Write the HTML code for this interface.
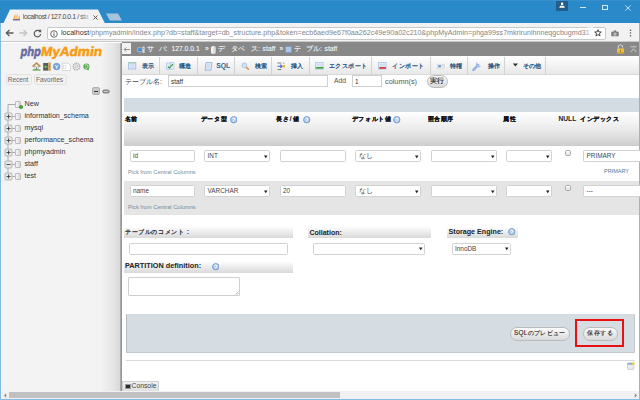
<!DOCTYPE html>
<html><head><meta charset="utf-8">
<style>
*{box-sizing:border-box;margin:0;padding:0}
html,body{width:640px;height:400px;overflow:hidden;background:#fff;font-family:"Liberation Sans",sans-serif;position:relative}
.a{position:absolute}
.t{position:absolute;white-space:nowrap;line-height:1}
/* chrome */
#title{left:0;top:0;width:640px;height:23px;background:linear-gradient(#4597cf 0,#2a8ac9 1px,#2a8ac9 100%)}
#tab{left:0;top:0;width:130px;height:23px}
#toolbar{left:0;top:23px;width:640px;height:19px;background:#f2f2f2;border-bottom:1px solid #c8c8c8}
#addr{left:46.5px;top:26.5px;width:559px;height:13px;background:#fff;border:1px solid #c9c9c9;border-radius:2px}
#lborder{left:0;top:23px;width:1px;height:377px;background:#84bbe3}
#rborder{left:639px;top:23px;width:1px;height:377px;background:#84bbe3}
#bborder{left:0;top:399px;width:640px;height:1px;background:#84bbe3}
/* nav */
#nav{left:1px;top:43px;width:120px;height:348px;background:linear-gradient(to right,#f3f3f3 0,#f3f3f3 100px,#e6e6e6 112px,#d6d6d6 120px)}
#navsep{left:120px;top:43px;width:2px;height:348px;background:linear-gradient(to right,#b4b4b4,#8c8c8c)}
/* main */
#bc{left:122px;top:42.2px;width:517px;height:14.3px;background:#888}
#menu{left:122px;top:56px;width:517px;height:19px;background:linear-gradient(#fff,#e8e8e8);border-bottom:1px solid #d8d8d8}
.div{position:absolute;top:57px;width:1px;height:18px;background:#d3d3d3}
.mt{position:absolute;top:62.9px;font-size:6.3px;font-weight:normal;color:#1a4d78;-webkit-text-stroke:0.25px #1a4d78;white-space:nowrap;line-height:1}
/* scrollbar */
#hs{left:1px;top:390.8px;width:638px;height:8.2px;background:#f1f1f1}
#hthumb{left:9px;top:392px;width:331px;height:6px;background:#c1c1c1}
</style></head><body>
<div class="a" id="title"></div>
<svg class="a" style="left:0;top:0" width="640" height="23">
  <polygon points="3.3,23.5 10,9.6 98,9.6 105,23.5" fill="#f2f2f2"/>
  <polygon points="106,13.5 118,13.5 122,20.5 110,20.5" fill="#a6c3da"/>
</svg>
<div class="a" id="toolbar"></div>
<div class="a" id="addr"></div>

<!-- tab content -->
<svg class="a" style="left:11.5px;top:13px" width="9" height="8" viewBox="0 0 9 8">
  <path d="M1.2 5.8 L3.2 0.8 L3.8 5.8 Z M4 5.8 L5.2 0.3 L6.2 5.8 Z M6.2 5.8 L7.3 2 L8.2 5.8 Z" fill="#f7a030"/>
  <path d="M3.2 0.8 L2.6 5.8 H3.8 Z M5.2 0.3 L4.6 5.8 H6.2 Z" fill="#fcd9a0"/>
  <rect x="1" y="6.2" width="7" height="1.2" fill="#55508a"/>
</svg>
<div class="t" style="left:22.8px;top:14px;font-size:6.9px;letter-spacing:-0.42px;color:#4a4a4a;width:68px;overflow:hidden">localhost / 127.0.0.1 / sta</div>
<div class="a" style="left:80px;top:12px;width:11px;height:10px;background:linear-gradient(to right,rgba(242,242,242,0),#f2f2f2)"></div>
<svg class="a" style="left:92.5px;top:15px" width="5" height="5" viewBox="0 0 5 5"><path d="M0.5 0.5 L4.5 4.5 M4.5 0.5 L0.5 4.5" stroke="#555" stroke-width="1"/></svg>
<!-- window controls -->
<div class="a" style="left:556px;top:1px;width:12px;height:9.5px;background:#245d8a"></div>
<svg class="a" style="left:556px;top:1px" width="12" height="10" viewBox="0 0 12 10"><rect x="5" y="1.5" width="2.2" height="2.6" rx="0.6" fill="#fff"/><path d="M3.2 6.8 L4.2 4.8 H7.9 L8.9 6.8 Z" fill="#fff"/></svg>
<div class="a" style="left:580px;top:7px;width:6px;height:1px;background:#d3e6f5"></div>
<div class="a" style="left:602px;top:4.8px;width:6px;height:5.3px;border:1px solid #d3e6f5"></div>
<svg class="a" style="left:625px;top:5px" width="6" height="6" viewBox="0 0 6 6"><path d="M0.3 0.3 L5.7 5.7 M5.7 0.3 L0.3 5.7" stroke="#d3e6f5" stroke-width="0.9"/></svg>
<!-- nav buttons -->
<svg class="a" style="left:5px;top:29px" width="9" height="8" viewBox="0 0 9 8"><path d="M8.5 4 H1.5 M4.5 1 L1.3 4 L4.5 7" stroke="#5a5a5a" stroke-width="1.3" fill="none"/></svg>
<svg class="a" style="left:19px;top:29px" width="9" height="8" viewBox="0 0 9 8"><path d="M0.5 4 H7.5 M4.5 1 L7.7 4 L4.5 7" stroke="#c4c4c4" stroke-width="1.3" fill="none"/></svg>
<svg class="a" style="left:33px;top:29px" width="9" height="9" viewBox="0 0 9 9"><path d="M7.3 3.2 A3.2 3.2 0 1 0 7.6 5" stroke="#5a5a5a" stroke-width="1.2" fill="none"/><path d="M5.2 0.8 L8.2 0.8 L8.2 3.8 Z" fill="#5a5a5a"/></svg>
<svg class="a" style="left:50px;top:29.5px" width="8" height="8" viewBox="0 0 8 8"><circle cx="4" cy="4" r="3.3" stroke="#5a5a5a" stroke-width="0.9" fill="none"/><rect x="3.5" y="3.3" width="1" height="2.7" fill="#5a5a5a"/><rect x="3.5" y="1.8" width="1" height="0.9" fill="#5a5a5a"/></svg>
<div class="t" style="left:61px;top:29.8px;font-size:7.15px;color:#858585;letter-spacing:0"><span style="color:#303030">localhost</span>/phpmyadmin/index.php?db=staff&amp;target=db_structure.php&amp;token=ecb6aed9e67f0aa262c49e90a02c210&amp;phpMyAdmin=phga99ss7mkrirunihnneqgcbugmd31'</div>
<div class="a" style="left:585px;top:27px;width:8px;height:11px;background:linear-gradient(to right,rgba(255,255,255,0),#fff)"></div>
<svg class="a" style="left:594px;top:28.7px" width="8" height="8" viewBox="0 0 9 9"><path d="M4.5 0.8 L5.5 3.3 L8.2 3.4 L6.1 5.1 L6.8 7.8 L4.5 6.3 L2.2 7.8 L2.9 5.1 L0.8 3.4 L3.5 3.3 Z" stroke="#333" stroke-width="1" fill="none" stroke-linejoin="round"/></svg>
<svg class="a" style="left:610.5px;top:30px" width="8" height="7" viewBox="0 0 8 7"><path d="M0.3 1.8 H2.3 L3 0.6 H5 L5.7 1.8 H7.7 V6.3 H0.3 Z" fill="#7b7b7b"/><circle cx="4" cy="4" r="1.5" fill="#e9e9e9"/><circle cx="4" cy="4" r="0.8" fill="#7b7b7b"/></svg>
<svg class="a" style="left:629px;top:29px" width="3" height="8" viewBox="0 0 3 8"><circle cx="1.5" cy="1.2" r="0.8" fill="#555"/><circle cx="1.5" cy="4" r="0.8" fill="#555"/><circle cx="1.5" cy="6.8" r="0.8" fill="#555"/></svg>
<div class="a" id="lborder"></div>
<div class="a" id="rborder"></div>
<div class="a" id="bborder"></div>

<div class="a" id="nav"></div>
<div class="a" id="navsep"></div>
<!-- logo -->
<svg class="a" style="left:18px;top:43px" width="86" height="17" viewBox="0 0 86 17">
 <g transform="translate(0,12.6) skewX(-9)">
 <text x="2" y="0" font-family="Liberation Sans" font-weight="bold" font-size="13.2" fill="#666aa2" stroke="#666aa2" stroke-width="0.55" textLength="20.3" lengthAdjust="spacingAndGlyphs">php</text>
 <text x="22.6" y="0" font-family="Liberation Sans" font-weight="bold" font-size="13.2" fill="#f89b10" stroke="#f89b10" stroke-width="0.55" textLength="60.8" lengthAdjust="spacingAndGlyphs">MyAdmin</text>
 </g>
</svg>
<!-- nav icons -->
<svg class="a" style="left:32px;top:62px" width="60" height="9" viewBox="0 0 60 9">
 <path d="M0.6 4.6 L4.5 1 L8.4 4.6" stroke="#c08a4a" stroke-width="1.6" fill="none" stroke-linejoin="round"/>
 <rect x="2.2" y="4.6" width="4.6" height="3" fill="#f4f4f4" stroke="#9a9a9a" stroke-width="0.4"/><rect x="3.8" y="5.4" width="1.4" height="2.2" fill="#777"/>
 <rect x="0.5" y="7.4" width="8" height="1.2" fill="#59a84a"/>
 <rect x="11.2" y="1" width="5.2" height="7.6" fill="#555e55"/><path d="M12 4.8 L14 3.2 V4.2 H15.6 V5.4 H14 V6.4 Z" fill="#6cc35a"/>
 <rect x="16.4" y="0.4" width="2.4" height="8.4" fill="#d3a05a"/><rect x="17.3" y="3.8" width="0.6" height="1" fill="#7a5020"/>
 <circle cx="24.6" cy="4.6" r="3.4" fill="#79a6dc"/><circle cx="24.6" cy="4.6" r="3.4" fill="none" stroke="#5a88c8" stroke-width="0.5"/><path d="M23.3 3.2 L24.6 5 L25.9 3.2 M24.6 5 V6.6" stroke="#fff" stroke-width="0.9" fill="none"/>
 <path d="M30.3 1.2 H36 L38.5 3.4 V8.6 H30.3 Z" fill="#fcfcfc" stroke="#c2c2c2" stroke-width="0.6"/><rect x="31.5" y="3.6" width="2.4" height="2.6" fill="none" stroke="#cfcfcf" stroke-width="0.5"/>
 <circle cx="44.5" cy="4.6" r="3.2" fill="none" stroke="#a9a9a9" stroke-width="1.6" stroke-dasharray="1 0.6"/><circle cx="44.5" cy="4.6" r="1.4" fill="#e0e0e0" stroke="#b0b0b0" stroke-width="0.5"/>
 <circle cx="54.4" cy="4.5" r="3.1" fill="#61ad5b"/><path d="M53 3.2 A1.8 1.8 0 1 1 53.2 6" stroke="#d8efd5" stroke-width="0.9" fill="none"/><path d="M54.6 7 L57 8.4 L56.2 6 Z" fill="#3f8f3a"/>
</svg>
<!-- recent / favorites -->
<div class="a" style="left:5.5px;top:74px;width:26px;height:11px;border:1px solid #e2e2e2;border-radius:3px;background:#f2f2f2"></div>
<div class="a" style="left:33.5px;top:74px;width:33px;height:11px;border:1px solid #e2e2e2;border-radius:3px;background:#f2f2f2"></div>
<div class="t" style="left:7.8px;top:76.5px;font-size:6.5px;color:#666">Recent</div>
<div class="t" style="left:36px;top:76.5px;font-size:6.6px;color:#666">Favorites</div>
<!-- collapse / link -->
<div class="a" style="left:91.5px;top:87px;width:8px;height:8px;border-radius:2px;background:#c8c8c8;border:1px solid #b0b0b0"></div>
<div class="a" style="left:93.5px;top:90.5px;width:4px;height:1px;background:#333"></div>
<svg class="a" style="left:101.5px;top:89px" width="8" height="5" viewBox="0 0 8 5"><rect x="0.3" y="0.6" width="7.4" height="3.8" rx="1.9" fill="#8a8a8a"/><rect x="1.8" y="1.9" width="4.4" height="1.2" rx="0.6" fill="#d0d0d0"/></svg>
<!-- tree -->
<svg class="a" style="left:0;top:98px" width="30" height="85" viewBox="0 0 30 85">
 <path d="M8 6.5 V78.5 M8 6.5 H15 M11 18.5 H15 M11 30.5 H15 M11 42.5 H15 M11 54.5 H15 M11 66.5 H15 M11 78.5 H15" stroke="#9a9a9a" stroke-width="0.8" fill="none"/>
</svg>
<svg class="a" style="left:4px;top:112px" width="9" height="9" viewBox="0 0 9 9"><rect x="1" y="1" width="7" height="7" rx="1" fill="#e6e6e6" stroke="#a8a8a8" stroke-width="0.8"/><path d="M2.5 4.5 H6.5 M4.5 2.5 V6.5" stroke="#444" stroke-width="0.9"/></svg><div class="a" style="left:15px;top:113px;width:6px;height:7px;border:1px solid #bdbdbd;border-radius:1px;background:linear-gradient(to right,#f8f8f8,#d6d6d6)"></div><svg class="a" style="left:4px;top:124px" width="9" height="9" viewBox="0 0 9 9"><rect x="1" y="1" width="7" height="7" rx="1" fill="#e6e6e6" stroke="#a8a8a8" stroke-width="0.8"/><path d="M2.5 4.5 H6.5 M4.5 2.5 V6.5" stroke="#444" stroke-width="0.9"/></svg><div class="a" style="left:15px;top:125px;width:6px;height:7px;border:1px solid #bdbdbd;border-radius:1px;background:linear-gradient(to right,#f8f8f8,#d6d6d6)"></div><svg class="a" style="left:4px;top:136px" width="9" height="9" viewBox="0 0 9 9"><rect x="1" y="1" width="7" height="7" rx="1" fill="#e6e6e6" stroke="#a8a8a8" stroke-width="0.8"/><path d="M2.5 4.5 H6.5 M4.5 2.5 V6.5" stroke="#444" stroke-width="0.9"/></svg><div class="a" style="left:15px;top:137px;width:6px;height:7px;border:1px solid #bdbdbd;border-radius:1px;background:linear-gradient(to right,#f8f8f8,#d6d6d6)"></div><svg class="a" style="left:4px;top:148px" width="9" height="9" viewBox="0 0 9 9"><rect x="1" y="1" width="7" height="7" rx="1" fill="#e6e6e6" stroke="#a8a8a8" stroke-width="0.8"/><path d="M2.5 4.5 H6.5 M4.5 2.5 V6.5" stroke="#444" stroke-width="0.9"/></svg><div class="a" style="left:15px;top:149px;width:6px;height:7px;border:1px solid #bdbdbd;border-radius:1px;background:linear-gradient(to right,#f8f8f8,#d6d6d6)"></div><svg class="a" style="left:4px;top:160px" width="9" height="9" viewBox="0 0 9 9"><rect x="1" y="1" width="7" height="7" rx="1" fill="#e6e6e6" stroke="#a8a8a8" stroke-width="0.8"/><path d="M2.5 4.5 H6.5" stroke="#444" stroke-width="0.9"/></svg><div class="a" style="left:15px;top:161px;width:6px;height:7px;border:1px solid #bdbdbd;border-radius:1px;background:linear-gradient(to right,#f8f8f8,#d6d6d6)"></div><svg class="a" style="left:4px;top:172px" width="9" height="9" viewBox="0 0 9 9"><rect x="1" y="1" width="7" height="7" rx="1" fill="#e6e6e6" stroke="#a8a8a8" stroke-width="0.8"/><path d="M2.5 4.5 H6.5 M4.5 2.5 V6.5" stroke="#444" stroke-width="0.9"/></svg><div class="a" style="left:15px;top:173px;width:6px;height:7px;border:1px solid #bdbdbd;border-radius:1px;background:linear-gradient(to right,#f8f8f8,#d6d6d6)"></div><div class="a" style="left:15px;top:101px;width:6px;height:7px;border:1px solid #bdbdbd;border-radius:1px;background:linear-gradient(to right,#f8f8f8,#d6d6d6)"></div><div class="a" style="left:19px;top:105px;width:3.5px;height:3.5px;border-radius:50%;background:#4aa23a"></div><div class="t" style="left:24.5px;top:100.5px;font-size:7.15px;color:#2a3440">New</div><div class="t" style="left:24.5px;top:112.5px;font-size:7.15px;color:#2a3440">information_schema</div><div class="t" style="left:24.5px;top:124.5px;font-size:7.15px;color:#2a3440">mysql</div><div class="t" style="left:24.5px;top:136.5px;font-size:7.15px;color:#2a3440">performance_schema</div><div class="t" style="left:24.5px;top:148.5px;font-size:7.15px;color:#2a3440">phpmyadmin</div><div class="t" style="left:24.5px;top:160.5px;font-size:7.15px;color:#2a3440">staff</div><div class="t" style="left:24.5px;top:172.5px;font-size:7.15px;color:#2a3440">test</div>

<div class="a" id="bc"></div>
<div class="a" id="menu"></div>


<!-- breadcrumb -->
<div class="a" style="left:122px;top:43px;width:9px;height:11px;background:#f2f2f2"></div>
<svg class="a" style="left:122.5px;top:45.5px" width="8" height="7" viewBox="0 0 8 7"><path d="M7 3.5 H1.2 M3.2 1.5 L1.2 3.5 L3.2 5.5" stroke="#666" stroke-width="0.7" fill="none"/></svg>
<svg class="a" style="left:137px;top:45.5px" width="8" height="8" viewBox="0 0 8 8"><rect x="0.3" y="1.5" width="5.2" height="4.5" fill="#b9c6d3"/><rect x="0.9" y="2.1" width="4" height="3.3" fill="#4f8ad0"/><rect x="5.6" y="0.5" width="2" height="6.5" fill="#d8dde2"/><rect x="6" y="2" width="1" height="0.6" fill="#4a4"/><rect x="1.8" y="6.3" width="2.4" height="1.2" fill="#9aa"/></svg>

<div class="t" style="left:147px;top:45.5px;font-size:6.8px;color:#f4f6fa;-webkit-text-stroke:0.1px #f4f6fa">サ</div><div class="t" style="left:158.5px;top:45.5px;font-size:6.8px;color:#f4f6fa;-webkit-text-stroke:0.1px #f4f6fa">バ:</div><div class="t" style="left:171.4px;top:45.5px;font-size:6.8px;color:#f4f6fa;-webkit-text-stroke:0.1px #f4f6fa">127.0.0.1</div><div class="t" style="left:205px;top:45.5px;font-size:6.8px;color:#f4f6fa;-webkit-text-stroke:0.1px #f4f6fa">&#187;</div><div class="t" style="left:218px;top:45.5px;font-size:6.8px;color:#f4f6fa;-webkit-text-stroke:0.1px #f4f6fa">デ</div><div class="t" style="left:231px;top:45.5px;font-size:6.8px;color:#f4f6fa;-webkit-text-stroke:0.1px #f4f6fa">タベ</div><div class="t" style="left:251px;top:45.5px;font-size:6.8px;color:#f4f6fa;-webkit-text-stroke:0.1px #f4f6fa">ス:</div><div class="t" style="left:262.6px;top:45.5px;font-size:6.8px;color:#f4f6fa;-webkit-text-stroke:0.1px #f4f6fa">staff</div><div class="t" style="left:279.5px;top:45.5px;font-size:6.8px;color:#f4f6fa;-webkit-text-stroke:0.1px #f4f6fa">&#187;</div><div class="t" style="left:293.5px;top:45.5px;font-size:6.8px;color:#f4f6fa;-webkit-text-stroke:0.1px #f4f6fa">テ</div><div class="t" style="left:306px;top:45.5px;font-size:6.8px;color:#f4f6fa;-webkit-text-stroke:0.1px #f4f6fa">ブル:</div><div class="t" style="left:324.5px;top:45.5px;font-size:6.8px;color:#f4f6fa;-webkit-text-stroke:0.1px #f4f6fa">staff</div><div class="a" style="left:211px;top:45.5px;width:5px;height:8px;border-radius:2px;background:linear-gradient(to right,#fff,#c8c8c8)"></div>

<div class="a" style="left:285px;top:46px;width:7px;height:7px;background:#a9c7e8;border:1px solid #7a9cc8"></div>

<svg class="a" style="left:615.8px;top:43.5px" width="9" height="10" viewBox="0 0 9 10"><path d="M2.3 4.6 V3.1 A2.2 2.2 0 0 1 6.7 3.1 V3.6" stroke="#d9d9d9" stroke-width="1" fill="none"/><rect x="1" y="4.5" width="7" height="4.8" fill="#eec040"/><rect x="1" y="8" width="7" height="1.3" fill="#d6a22a"/><rect x="4.1" y="6.2" width="0.9" height="1.4" fill="#7a5010"/></svg>
<svg class="a" style="left:629.5px;top:45.5px" width="7" height="7" viewBox="0 0 7 7"><path d="M0.5 0.8 H6.5 M0.8 6 L3.5 2.8 L6.2 6" stroke="#d6d6d6" stroke-width="0.9" fill="none"/></svg>
<div class="div" style="left:159px"></div><div class="div" style="left:197px"></div><div class="div" style="left:234px"></div><div class="div" style="left:271px"></div><div class="div" style="left:309px"></div><div class="div" style="left:371px"></div><div class="div" style="left:430px"></div><div class="div" style="left:467px"></div><div class="div" style="left:504px"></div><div class="div" style="left:545px"></div><svg class="a" style="left:128px;top:62px" width="9" height="9" viewBox="0 0 9 9"><rect x="0.4" y="0.4" width="7.4" height="6.6" fill="#dce8f6" stroke="#9dbbe2" stroke-width="0.8"/><rect x="0.8" y="0.8" width="6.6" height="1" fill="#b5dca0"/><path d="M3 1.8 V7 M5.3 1.8 V7" stroke="#b8cde8" stroke-width="0.6"/></svg><div class="mt" style="left:141.5px;font-size:6.3px;letter-spacing:0.25px">表示</div><svg class="a" style="left:166px;top:62px" width="9" height="9" viewBox="0 0 9 9"><rect x="0.5" y="1" width="4.5" height="6.5" fill="#dfeaf7" stroke="#a3bfe3" stroke-width="0.6"/><rect x="4.2" y="0.5" width="3.8" height="6.5" fill="#e6eff9" stroke="#a3bfe3" stroke-width="0.6"/><path d="M2 4.8 L3.3 6 L7 2.2" stroke="#3e9b3e" stroke-width="1.2" fill="none"/></svg><div class="mt" style="left:178.7px;font-size:6.3px;letter-spacing:0.6px">構造</div><svg class="a" style="left:204px;top:62px" width="9" height="9" viewBox="0 0 9 9"><path d="M2 0.6 H8 L7 8.2 H1 Z" fill="#e3edf9" stroke="#7fa4d6" stroke-width="0.7"/><path d="M2.8 2.8 H6.3 M2.6 4.4 H6.1 M2.4 6 H5.9" stroke="#a7c0e0" stroke-width="0.5"/></svg><div class="mt" style="left:216.3px;font-size:6.8px;font-weight:bold;top:63.2px;color:#2f6390;-webkit-text-stroke:0">SQL</div><svg class="a" style="left:241px;top:62px" width="9" height="9" viewBox="0 0 9 9"><circle cx="3.4" cy="3.4" r="2.5" fill="#d3e3f6" stroke="#9cb8de" stroke-width="0.7"/><path d="M5.2 5.2 L7.8 7.6" stroke="#d9914a" stroke-width="1.5"/></svg><div class="mt" style="left:254.7px;font-size:6.3px;letter-spacing:0.3px">検索</div><svg class="a" style="left:277px;top:62px" width="9" height="9" viewBox="0 0 9 9"><path d="M0.5 1 H4.5 M0.5 7.5 H4.5" stroke="#666" stroke-width="0.8"/><path d="M0.5 4.2 H5 M3.3 2.6 L5.2 4.2 L3.3 5.8" stroke="#4a62d8" stroke-width="1.1" fill="none"/><rect x="5.6" y="3" width="2.4" height="2.6" fill="#e8c020"/><circle cx="6.8" cy="1.2" r="0.6" fill="#8a7ad0"/></svg><div class="mt" style="left:290.8px;font-size:6.3px;letter-spacing:0.3px">挿入</div><svg class="a" style="left:315px;top:62px" width="9" height="9" viewBox="0 0 9 9"><rect x="0.5" y="0.6" width="7.6" height="6.6" fill="#e4eef8" stroke="#a4c0e4" stroke-width="0.7"/><path d="M1.5 2.3 H7 M1.5 3.6 H7" stroke="#b9cfe9" stroke-width="0.5"/><rect x="0.8" y="5" width="7.6" height="1.6" fill="#3f9e3a"/></svg><div class="mt" style="left:329px;font-size:6.3px;letter-spacing:0.45px">エクスポート</div><svg class="a" style="left:378px;top:62px" width="9" height="9" viewBox="0 0 9 9"><rect x="0.5" y="0.6" width="7.6" height="6.6" fill="#e4eef8" stroke="#a4c0e4" stroke-width="0.7"/><path d="M1.5 2.3 H7 M1.5 3.6 H7" stroke="#b9cfe9" stroke-width="0.5"/><rect x="1.3" y="5" width="6.6" height="1.8" fill="#d83a3a"/></svg><div class="mt" style="left:392.3px;font-size:6.3px;letter-spacing:0.5px">インポート</div><svg class="a" style="left:437px;top:62px" width="9" height="9" viewBox="0 0 9 9"><rect x="0.5" y="2.2" width="7" height="4.6" fill="#f6f6f6" stroke="#c8c8c8" stroke-width="0.5"/><rect x="1.3" y="3.2" width="2.6" height="2.2" fill="#5b8fd6"/><path d="M4.6 3.6 H6.6 M4.6 4.9 H6.6" stroke="#aaa" stroke-width="0.5"/></svg><div class="mt" style="left:450px;letter-spacing:0.25px">特権</div><svg class="a" style="left:472px;top:60.5px" width="10" height="10" viewBox="0 0 9 9"><path d="M1.3 8 L5.6 3.6" stroke="#8fb1e6" stroke-width="2.2" stroke-linecap="round"/><path d="M4.6 1 A2.6 2.6 0 1 0 8.3 4.6 L6.6 4.6 L5 3 Z" fill="#a8bfe0"/></svg><div class="mt" style="left:487.5px;letter-spacing:0.25px">操作</div><svg class="a" style="left:511.5px;top:62px" width="9" height="9" viewBox="0 0 9 9"><path d="M0.8 1.6 H6 L3.4 4.6 Z" fill="#333"/></svg><div class="mt" style="left:522.5px;font-size:6.3px;letter-spacing:0.4px">その他</div>
<!-- table name row -->
<div class="t" style="left:125px;top:78px;font-size:7px;color:#444">テーブル名:</div>
<div class="a" style="left:168px;top:75px;width:160px;height:12px;border:1px solid #d0d0d0;background:#fff"></div>
<div class="t" style="left:171px;top:78.5px;font-size:6.4px;color:#333">staff</div>
<div class="t" style="left:334px;top:78px;font-size:6.8px;color:#555">Add</div>
<div class="a" style="left:352px;top:75px;width:30px;height:12px;border:1px solid #d0d0d0;background:#fff"></div>
<div class="t" style="left:355px;top:78.5px;font-size:6.4px;color:#333">1</div>
<div class="t" style="left:385px;top:78px;font-size:7.3px;color:#555">column(s)</div>
<div class="a" style="left:426.5px;top:75px;width:21px;height:13px;border:1px solid #bbb;border-radius:7px;background:linear-gradient(#fafafa,#d8d8d8)"></div>
<div class="t" style="left:430.3px;top:78px;font-size:6.7px;color:#222;-webkit-text-stroke:0.15px #222">実行</div>
<!-- stripe + header -->
<div class="a" style="left:124px;top:98px;width:515px;height:14px;background:#d3dce3"></div>
<div class="a" style="left:124px;top:112px;width:515px;height:33.5px;background:linear-gradient(#ffffff 0%,#e9e9e9 55%,#cdcdcd 100%)"></div>
<div class="t" style="left:125px;top:116.3px;font-size:6.3px;font-weight:bold;color:#111;-webkit-text-stroke:0.12px #111">名前</div><div class="t" style="left:200.8px;top:116.3px;font-size:6.3px;font-weight:bold;letter-spacing:0.65px;color:#111;-webkit-text-stroke:0.12px #111">データ型</div><div class="t" style="left:275.8px;top:116.3px;font-size:6.3px;font-weight:bold;letter-spacing:1px;color:#111;-webkit-text-stroke:0.12px #111">長さ/値</div><div class="t" style="left:351.7px;top:116.3px;font-size:6.3px;font-weight:bold;letter-spacing:0.63px;color:#111;-webkit-text-stroke:0.12px #111">デフォルト値</div><div class="t" style="left:427.8px;top:116.3px;font-size:6.3px;font-weight:bold;letter-spacing:0.45px;color:#111;-webkit-text-stroke:0.12px #111">照合順序</div><div class="t" style="left:502.9px;top:116.3px;font-size:6.3px;font-weight:bold;letter-spacing:0.65px;color:#111;-webkit-text-stroke:0.12px #111">属性</div><div class="t" style="left:558.4px;top:116.3px;font-size:6.7px;font-weight:bold;color:#222">NULL</div><div class="t" style="left:580.2px;top:116.3px;font-size:6.3px;font-weight:bold;letter-spacing:0.52px;color:#111;-webkit-text-stroke:0.12px #111">インデックス</div><svg class="a" style="left:229.6px;top:116.0px" width="7.5" height="7.5" viewBox="0 0 8 8"><circle cx="4" cy="4" r="3.4" fill="#b7cdea" stroke="#6b99d4" stroke-width="1"/><path d="M2.8 3.2 Q2.8 2 4 2 Q5.2 2 5.2 3.1 Q5.2 3.8 4.2 4.3 V5" stroke="#fff" stroke-width="0.9" fill="none"/><circle cx="4.1" cy="6" r="0.5" fill="#fff"/></svg><svg class="a" style="left:303.0px;top:116.0px" width="7.5" height="7.5" viewBox="0 0 8 8"><circle cx="4" cy="4" r="3.4" fill="#b7cdea" stroke="#6b99d4" stroke-width="1"/><path d="M2.8 3.2 Q2.8 2 4 2 Q5.2 2 5.2 3.1 Q5.2 3.8 4.2 4.3 V5" stroke="#fff" stroke-width="0.9" fill="none"/><circle cx="4.1" cy="6" r="0.5" fill="#fff"/></svg><svg class="a" style="left:393.0px;top:116.0px" width="7.5" height="7.5" viewBox="0 0 8 8"><circle cx="4" cy="4" r="3.4" fill="#b7cdea" stroke="#6b99d4" stroke-width="1"/><path d="M2.8 3.2 Q2.8 2 4 2 Q5.2 2 5.2 3.1 Q5.2 3.8 4.2 4.3 V5" stroke="#fff" stroke-width="0.9" fill="none"/><circle cx="4.1" cy="6" r="0.5" fill="#fff"/></svg>
<!-- rows -->
<div class="a" style="left:124px;top:145.5px;width:515px;height:35px;background:#fff"></div>
<div class="a" style="left:124px;top:180.5px;width:515px;height:34px;background:#e5e5e5"></div>
<div class="a" style="left:129.5px;top:150.1px;width:65.5px;height:12.0px;border:1px solid #d2d2d2;border-radius:1.5px;background:#fff"></div><div class="t" style="left:133.0px;top:153.3px;font-size:6.4px;color:#444">id</div><div class="a" style="left:204px;top:150.1px;width:66px;height:12.0px;border:1px solid #d2d2d2;border-radius:1.5px;background:#fff"></div><div class="t" style="left:207.5px;top:153.3px;font-size:6.4px;color:#444">INT</div><svg class="a" style="left:264px;top:154.6px" width="4" height="4" viewBox="0 0 4 4"><path d="M0 0.5 H3.5 L1.75 3.3 Z" fill="#222"/></svg><div class="a" style="left:279.5px;top:150.1px;width:66.5px;height:12.0px;border:1px solid #d2d2d2;border-radius:1.5px;background:#fff"></div><div class="a" style="left:355px;top:150.1px;width:66px;height:12.0px;border:1px solid #d2d2d2;border-radius:1.5px;background:#fff"></div><div class="t" style="left:358.5px;top:153.3px;font-size:6.8px;color:#444">なし</div><svg class="a" style="left:415px;top:154.6px" width="4" height="4" viewBox="0 0 4 4"><path d="M0 0.5 H3.5 L1.75 3.3 Z" fill="#222"/></svg><div class="a" style="left:430.5px;top:150.1px;width:66.0px;height:12.0px;border:1px solid #d2d2d2;border-radius:1.5px;background:#fff"></div><svg class="a" style="left:490.5px;top:154.6px" width="4" height="4" viewBox="0 0 4 4"><path d="M0 0.5 H3.5 L1.75 3.3 Z" fill="#222"/></svg><div class="a" style="left:506px;top:150.1px;width:45.5px;height:12.0px;border:1px solid #d2d2d2;border-radius:1.5px;background:#fff"></div><svg class="a" style="left:545.5px;top:154.6px" width="4" height="4" viewBox="0 0 4 4"><path d="M0 0.5 H3.5 L1.75 3.3 Z" fill="#222"/></svg><div class="a" style="left:564.5px;top:150.1px;width:6px;height:6px;border:1px solid #aaa;border-radius:1.5px;background:linear-gradient(#fff,#ddd)"></div><div class="a" style="left:583px;top:150.1px;width:77px;height:12.0px;border:1px solid #d2d2d2;border-radius:1.5px;background:#fff"></div><div class="t" style="left:586.5px;top:153.3px;font-size:6.4px;color:#444">PRIMARY</div><div class="t" style="left:128px;top:170.0px;font-size:5.7px;color:#6f8d9e">Pick from Central Columns</div><div class="a" style="left:129.5px;top:185.1px;width:65.5px;height:12.0px;border:1px solid #d2d2d2;border-radius:1.5px;background:#fff"></div><div class="t" style="left:133.0px;top:188.3px;font-size:6.4px;color:#444">name</div><div class="a" style="left:204px;top:185.1px;width:66px;height:12.0px;border:1px solid #d2d2d2;border-radius:1.5px;background:#fff"></div><div class="t" style="left:207.5px;top:188.3px;font-size:6.4px;color:#444">VARCHAR</div><svg class="a" style="left:264px;top:189.6px" width="4" height="4" viewBox="0 0 4 4"><path d="M0 0.5 H3.5 L1.75 3.3 Z" fill="#222"/></svg><div class="a" style="left:279.5px;top:185.1px;width:66.5px;height:12.0px;border:1px solid #d2d2d2;border-radius:1.5px;background:#fff"></div><div class="t" style="left:283.0px;top:188.3px;font-size:6.4px;color:#444">20</div><div class="a" style="left:355px;top:185.1px;width:66px;height:12.0px;border:1px solid #d2d2d2;border-radius:1.5px;background:#fff"></div><div class="t" style="left:358.5px;top:188.3px;font-size:6.8px;color:#444">なし</div><svg class="a" style="left:415px;top:189.6px" width="4" height="4" viewBox="0 0 4 4"><path d="M0 0.5 H3.5 L1.75 3.3 Z" fill="#222"/></svg><div class="a" style="left:430.5px;top:185.1px;width:66.0px;height:12.0px;border:1px solid #d2d2d2;border-radius:1.5px;background:#fff"></div><svg class="a" style="left:490.5px;top:189.6px" width="4" height="4" viewBox="0 0 4 4"><path d="M0 0.5 H3.5 L1.75 3.3 Z" fill="#222"/></svg><div class="a" style="left:506px;top:185.1px;width:45.5px;height:12.0px;border:1px solid #d2d2d2;border-radius:1.5px;background:#fff"></div><svg class="a" style="left:545.5px;top:189.6px" width="4" height="4" viewBox="0 0 4 4"><path d="M0 0.5 H3.5 L1.75 3.3 Z" fill="#222"/></svg><div class="a" style="left:564.5px;top:185.1px;width:6px;height:6px;border:1px solid #aaa;border-radius:1.5px;background:linear-gradient(#fff,#ddd)"></div><div class="a" style="left:583px;top:185.1px;width:77px;height:12.0px;border:1px solid #d2d2d2;border-radius:1.5px;background:#fff"></div><div class="t" style="left:586.5px;top:188.3px;font-size:6.4px;color:#444">---</div><div class="t" style="left:128px;top:205.0px;font-size:5.7px;color:#6f8d9e">Pick from Central Columns</div><div class="t" style="left:604px;top:169px;font-size:5.5px;color:#4a7a9a">PRIMARY</div>
<!-- comment / collation / storage -->
<div class="a" style="left:124px;top:226px;width:168.5px;height:11.5px;background:linear-gradient(#fff,#d9d9d9)"></div>
<div class="t" style="left:125px;top:228.5px;font-size:6.3px;font-weight:bold;letter-spacing:0.62px;color:#222">テーブルのコメント :</div>
<div class="a" style="left:128.5px;top:242.5px;width:159px;height:12px;border:1px solid #d2d2d2;border-radius:1.5px;background:#fff"></div>
<div class="a" style="left:308px;top:226px;width:123px;height:11.5px;background:linear-gradient(#fff,#d9d9d9)"></div>
<div class="t" style="left:309.5px;top:228.9px;font-size:7px;font-weight:bold;color:#222">Collation:</div>
<div class="a" style="left:313px;top:242.5px;width:112px;height:12.0px;border:1px solid #d2d2d2;border-radius:1.5px;background:#fff"></div><svg class="a" style="left:419px;top:247.0px" width="4" height="4" viewBox="0 0 4 4"><path d="M0 0.5 H3.5 L1.75 3.3 Z" fill="#222"/></svg>
<div class="a" style="left:447px;top:226.5px;width:71px;height:11px;background:linear-gradient(#fff,#d9d9d9)"></div>
<div class="t" style="left:448.5px;top:228.9px;font-size:7.15px;font-weight:bold;color:#222">Storage Engine:</div>
<svg class="a" style="left:508.0px;top:228.0px" width="7.5" height="7.5" viewBox="0 0 8 8"><circle cx="4" cy="4" r="3.4" fill="#b7cdea" stroke="#6b99d4" stroke-width="1"/><path d="M2.8 3.2 Q2.8 2 4 2 Q5.2 2 5.2 3.1 Q5.2 3.8 4.2 4.3 V5" stroke="#fff" stroke-width="0.9" fill="none"/><circle cx="4.1" cy="6" r="0.5" fill="#fff"/></svg>
<div class="a" style="left:451.5px;top:242.5px;width:59.0px;height:12.0px;border:1px solid #d2d2d2;border-radius:1.5px;background:#fff"></div><div class="t" style="left:455.0px;top:245.7px;font-size:6.4px;color:#444">InnoDB</div><svg class="a" style="left:504.5px;top:247.0px" width="4" height="4" viewBox="0 0 4 4"><path d="M0 0.5 H3.5 L1.75 3.3 Z" fill="#222"/></svg>
<div class="a" style="left:124px;top:261px;width:168.5px;height:11.5px;background:linear-gradient(#fff,#d9d9d9)"></div>
<div class="t" style="left:125px;top:262.4px;font-size:7.3px;font-weight:bold;color:#222">PARTITION definition:</div>
<svg class="a" style="left:211.5px;top:263.0px" width="7.5" height="7.5" viewBox="0 0 8 8"><circle cx="4" cy="4" r="3.4" fill="#b7cdea" stroke="#6b99d4" stroke-width="1"/><path d="M2.8 3.2 Q2.8 2 4 2 Q5.2 2 5.2 3.1 Q5.2 3.8 4.2 4.3 V5" stroke="#fff" stroke-width="0.9" fill="none"/><circle cx="4.1" cy="6" r="0.5" fill="#fff"/></svg>
<div class="a" style="left:128px;top:277px;width:112px;height:18.5px;border:1px solid #cfcfcf;border-radius:1px;background:#fff"></div><svg class="a" style="left:235px;top:290.5px" width="4" height="4" viewBox="0 0 4 4"><path d="M3.5 0.5 L0.5 3.5 M3.5 2 L2 3.5" stroke="#999" stroke-width="0.6"/></svg>
<!-- bottom panel -->
<div class="a" style="left:125.5px;top:313.5px;width:509px;height:39.5px;background:#d5dde3;border-left:1px solid #b5bdc3;border-right:1px solid #c2cad0;border-bottom:1px solid #c2cad0;border-radius:1px"></div>
<div class="a" style="left:509.5px;top:326.5px;width:60px;height:14px;border:1px solid #bbb;border-radius:7px;background:linear-gradient(#fbfbfb,#dadada)"></div>
<div class="t" style="left:514px;top:330.3px;font-size:6.4px;letter-spacing:0.29px;color:#222;-webkit-text-stroke:0.12px #222">SQLのプレビュー</div>
<div class="a" style="left:583px;top:326.5px;width:35px;height:14px;border:1px solid #bbb;border-radius:7px;background:linear-gradient(#fbfbfb,#dadada)"></div>
<div class="t" style="left:587.3px;top:330.3px;font-size:6.4px;letter-spacing:0.5px;color:#222;-webkit-text-stroke:0.12px #222">保存する</div>
<div class="a" style="left:575px;top:319px;width:49px;height:28px;border:2px solid #e81010"></div>
<div class="a" style="left:125.5px;top:360px;width:509px;height:1px;background:#dadada"></div>
<svg class="a" style="left:627px;top:362px" width="8" height="8" viewBox="0 0 8 8"><rect x="0.5" y="0.8" width="6.4" height="6.6" rx="0.8" fill="#ececec" stroke="#b5b5b5" stroke-width="0.6"/><rect x="0.8" y="1.1" width="5.8" height="1.6" fill="#8aa8cc"/><circle cx="6.4" cy="1.4" r="1.3" fill="#f2dc20"/></svg>
<!-- console tab -->
<div class="a" style="left:121.5px;top:380.5px;width:37px;height:10.5px;background:linear-gradient(#f0f0f0,#e0e0e0);border:1px solid #cfcfcf;border-bottom:none;border-radius:1px 1px 0 0"></div>
<div class="a" style="left:125px;top:383.8px;width:5.5px;height:5px;background:#2a2a2a;border:1px solid #9a9a9a"></div>
<div class="t" style="left:131.5px;top:382.5px;font-size:6.8px;color:#444">Console</div>
<div class="a" id="hs"></div>
<div class="a" id="hthumb"></div>
<svg class="a" style="left:3px;top:392.5px" width="4" height="5" viewBox="0 0 4 5"><path d="M3.2 0.3 L1 2.5 L3.2 4.7 Z" fill="#888"/></svg>
<svg class="a" style="left:634px;top:392.5px" width="4" height="5" viewBox="0 0 4 5"><path d="M0.8 0.3 L3 2.5 L0.8 4.7 Z" fill="#888"/></svg>
</body></html>
